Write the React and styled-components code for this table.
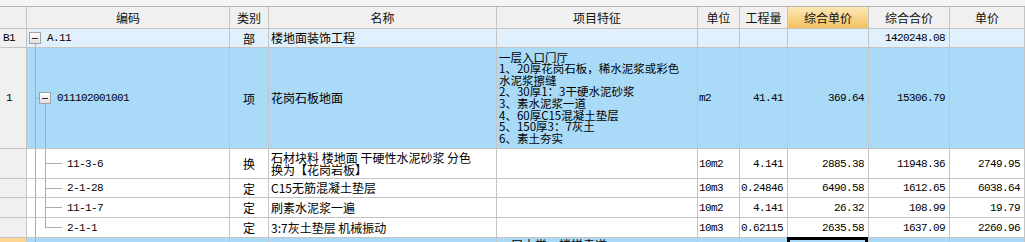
import React from 'react';
import styled, { createGlobalStyle } from 'styled-components';

const colors = {
  grid: '#c4c4c4',
  tree: '#acacac',
  strip: '#f4f4f4',
  stripLine: '#b4b4b4',
  gutter: '#f0f0f0',
  header: '#f0f0f0',
  group: '#e0f1fd',
  selected: '#a9dbf8',
  current: '#fcd690',
  white: '#ffffff',
};

const fonts = {
  cjk: '"Noto Sans CJK SC", "Noto Sans", sans-serif',
  mono: '"Liberation Mono", "Noto Sans CJK SC", monospace',
};

const COLUMNS = '27px 203px 39px 228px 201px 42px 48px 81px 81px 75px';

const GlobalStyle = createGlobalStyle`
  html, body {
    margin: 0;
    padding: 0;
    background: #fff;
    overflow: hidden;
  }
  body {
    font-family: ${fonts.cjk};
    font-size: 12px;
    color: #000;
  }
`;

const Sheet = styled.div`
  width: 1025px;
  height: 242px;
  overflow: hidden;
`;

const TopStrip = styled.div`
  box-sizing: border-box;
  height: 7px;
  background: ${colors.strip};
  border-bottom: 1px solid ${colors.stripLine};
`;

const Row = styled.div`
  display: grid;
  grid-template-columns: ${COLUMNS};
  height: ${(p) => p.$h}px;
  background: ${(p) => p.$bg || colors.white};
`;

const justify = { left: 'flex-start', center: 'center', right: 'flex-end' };

const Cell = styled.div`
  box-sizing: border-box;
  min-width: 0;
  overflow: hidden;
  white-space: nowrap;
  display: flex;
  align-items: center;
  justify-content: ${(p) => justify[p.$align || 'left']};
  padding: ${(p) => (p.$align === 'right' ? '0 4px 0 0' : p.$align === 'center' ? '0' : '0 0 0 1px')};
  border-right: 1px solid ${colors.grid};
  border-bottom: 1px solid ${colors.grid};
`;

const HeaderCell = styled(Cell)`
  justify-content: center;
  padding: 0;
  font-size: 12px;
  color: #111;
  background: ${(p) => (p.$accent ? 'linear-gradient(#fde8b6, #f5c161)' : colors.header)};
`;

const Gutter = styled(Cell)`
  justify-content: center;
  padding: 0 8px 0 0;
  font-family: ${fonts.mono};
  font-size: 11px;
  letter-spacing: -0.6px;
  background: ${(p) => p.$bg || colors.gutter};
`;

const NumCell = styled(Cell)`
  font-family: ${fonts.mono};
  font-size: 11px;
  letter-spacing: -0.6px;
`;

const SelectedCell = styled(NumCell)`
  position: relative;
  overflow: visible;
  &::after {
    content: '';
    position: absolute;
    top: -1px;
    left: -1px;
    right: 0;
    bottom: -12px;
    border: 3px solid #000;
  }
`;

const TextBlock = styled(Cell)`
  flex-direction: column;
  justify-content: ${(p) => (p.$top ? 'flex-start' : 'center')};
  align-items: flex-start;
  font-size: ${(p) => p.$size || 12}px;
  line-height: ${(p) => p.$lh || 12}px;
  padding: ${(p) => (p.$top ? '1px 0 0 2px' : '0 0 0 2px')};
`;

const CodeCell = styled(Cell)`
  align-items: stretch;
  padding: 0;
`;

const CodeText = styled.span`
  align-self: center;
  font-family: ${fonts.mono};
  font-size: 11px;
  letter-spacing: -0.6px;
`;

const TreeSvg = styled.svg`
  flex: none;
  display: block;
  height: 100%;
`;

const ToggleBox = ({ x }) => (
  <g>
    <rect
      x={x + 0.5}
      y="50%"
      width="11"
      height="11"
      transform="translate(0 -5.5)"
      fill="url(#toggleFill)"
      stroke="#a2a2a2"
    />
    <line x1={x + 3} x2={x + 9} y1="50%" y2="50%" stroke="#2c2c2c" />
  </g>
);

const treeWidth = { group: 20, item: 30, child: 40, last: 40, rail: 40 };

const TreeGlyph = ({ kind }) => (
  <TreeSvg width={treeWidth[kind]} shapeRendering="crispEdges">
    <defs>
      <linearGradient id="toggleFill" x1="0" y1="0" x2="0" y2="1">
        <stop offset="0" stopColor="#ffffff" />
        <stop offset="1" stopColor="#dedede" />
      </linearGradient>
    </defs>
    <g stroke={colors.tree} strokeWidth="1">
      {kind === 'group' && <line x1="8.5" x2="8.5" y1="50%" y2="100%" />}
      {kind !== 'group' && <line x1="8.5" x2="8.5" y1="0" y2="100%" />}
      {kind === 'item' && (
        <>
          <line x1="8" x2="12" y1="50%" y2="50%" />
          <line x1="18.5" x2="18.5" y1="50%" y2="100%" />
        </>
      )}
      {(kind === 'child' || kind === 'last') && (
        <>
          <line x1="18.5" x2="18.5" y1="0" y2={kind === 'last' ? '50%' : '100%'} />
          <line x1="18" x2="35" y1="50%" y2="50%" />
        </>
      )}
    </g>
    {kind === 'group' && <ToggleBox x={2} />}
    {kind === 'item' && <ToggleBox x={12} />}
  </TreeSvg>
);

const headers = [
  { label: '' },
  { label: '编码' },
  { label: '类别' },
  { label: '名称' },
  { label: '项目特征' },
  { label: '单位' },
  { label: '工程量' },
  { label: '综合单价', accent: true },
  { label: '综合合价' },
  { label: '单价' },
];

const rows = [
  {
    no: 'B1',
    tree: 'group',
    code: 'A.11',
    type: '部',
    name: ['楼地面装饰工程'],
    feature: [],
    total: '1420248.08',
    h: 19,
    bg: colors.group,
  },
  {
    no: '1',
    tree: 'item',
    code: '011102001001',
    type: '项',
    name: ['花岗石板地面'],
    feature: [
      '一层入口门厅',
      '1、20厚花岗石板，稀水泥浆或彩色',
      '水泥浆擦缝',
      '2、30厚1：3干硬水泥砂浆',
      '3、素水泥浆一道',
      '4、60厚C15混凝土垫层',
      '5、150厚3：7灰土',
      '6、素土夯实',
    ],
    unit: 'm2',
    qty: '41.41',
    price: '369.64',
    total: '15306.79',
    h: 101,
    bg: colors.selected,
  },
  {
    tree: 'child',
    code: '11-3-6',
    type: '换',
    name: ['石材块料 楼地面 干硬性水泥砂浆 分色', '换为【花岗岩板】'],
    feature: [],
    unit: '10m2',
    qty: '4.141',
    price: '2885.38',
    total: '11948.36',
    unitPrice: '2749.95',
    h: 30,
  },
  {
    tree: 'child',
    code: '2-1-28',
    type: '定',
    name: ['C15无筋混凝土垫层'],
    feature: [],
    unit: '10m3',
    qty: '0.24846',
    price: '6490.58',
    total: '1612.65',
    unitPrice: '6038.64',
    h: 19,
  },
  {
    tree: 'child',
    code: '11-1-7',
    type: '定',
    name: ['刷素水泥浆一遍'],
    feature: [],
    unit: '10m2',
    qty: '4.141',
    price: '26.32',
    total: '108.99',
    unitPrice: '19.79',
    h: 20,
  },
  {
    tree: 'last',
    code: '2-1-1',
    type: '定',
    name: ['3:7灰土垫层 机械振动'],
    feature: [],
    unit: '10m3',
    qty: '0.62115',
    price: '2635.58',
    total: '1637.09',
    unitPrice: '2260.96',
    h: 20,
  },
];

const Lines = ({ items }) => items.map((line) => <div key={line}>{line}</div>);

const DataRow = ({ row }) => (
  <Row $h={row.h} $bg={row.bg}>
    <Gutter>{row.no}</Gutter>
    <CodeCell>
      <TreeGlyph kind={row.tree} />
      <CodeText>{row.code}</CodeText>
    </CodeCell>
    <Cell $align="center">{row.type}</Cell>
    <TextBlock $lh={12}>
      <Lines items={row.name} />
    </TextBlock>
    <TextBlock $lh={11.6} $size={11.5}>
      <Lines items={row.feature} />
    </TextBlock>
    <NumCell>{row.unit}</NumCell>
    <NumCell $align="right">{row.qty}</NumCell>
    <NumCell $align="right">{row.price}</NumCell>
    <NumCell $align="right">{row.total}</NumCell>
    <NumCell $align="right">{row.unitPrice}</NumCell>
  </Row>
);

const App = () => (
  <>
    <GlobalStyle />
    <Sheet>
      <TopStrip />
      <Row $h={22} $bg={colors.header}>
        {headers.map((h, i) => (
          <HeaderCell key={i} $accent={h.accent}>
            {h.label}
          </HeaderCell>
        ))}
      </Row>
      {rows.map((row) => (
        <DataRow key={row.code} row={row} />
      ))}
      <Row $h={30} $bg={colors.selected}>
        <Gutter $bg={colors.current} />
        <CodeCell>
          <TreeGlyph kind="rail" />
        </CodeCell>
        <Cell />
        <Cell />
        <TextBlock $top $lh={11.6}>
          <div>一层大堂、楼梯走道</div>
        </TextBlock>
        <Cell />
        <Cell />
        <SelectedCell />
        <Cell />
        <Cell />
      </Row>
    </Sheet>
  </>
);

export default App;
